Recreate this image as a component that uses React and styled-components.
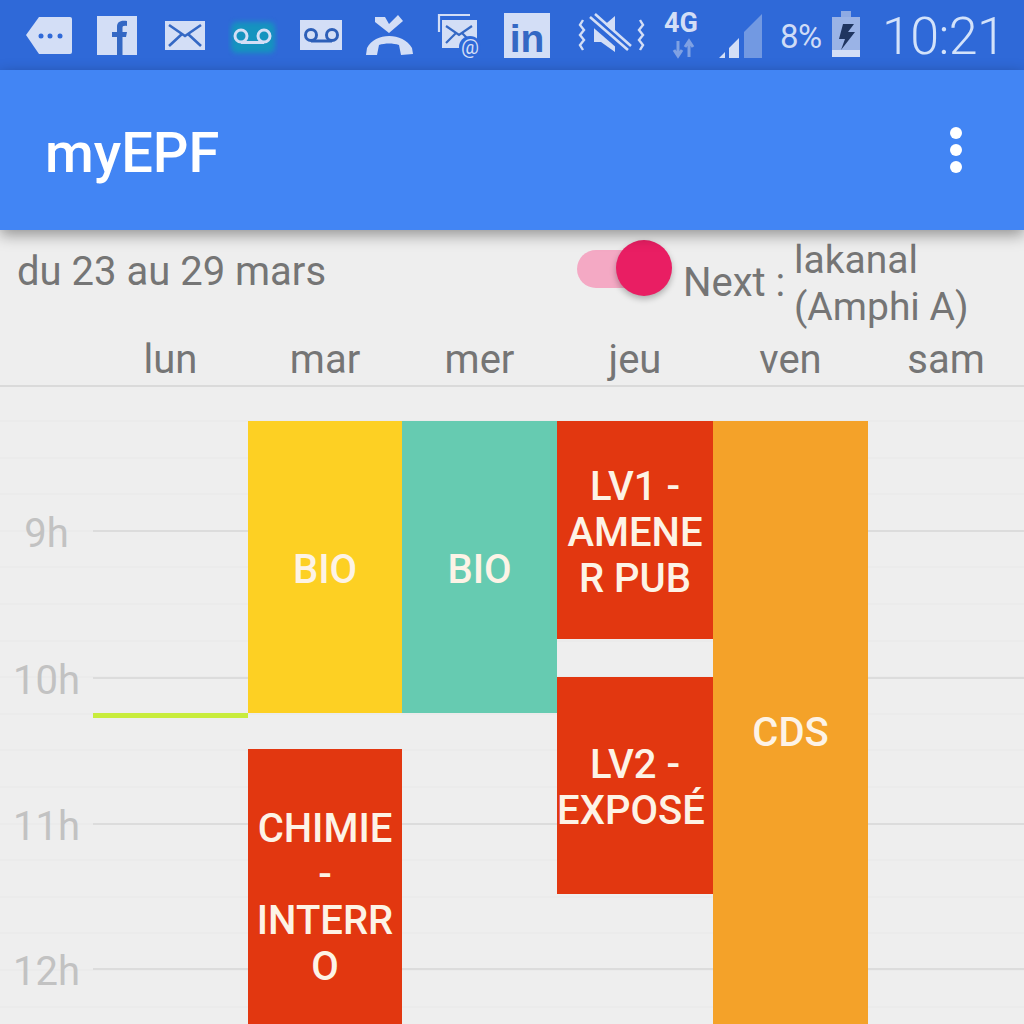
import React from 'react';
import styled, { createGlobalStyle } from 'styled-components';

const Global = createGlobalStyle`
  html, body { margin: 0; padding: 0; background: #eeeeee; }
  body { font-family: Roboto, "Liberation Sans", sans-serif; }
`;

const COLUMNS = '93px 155px 154px 155px 156px 155px 156px';

const Page = styled.div`
  width: 1024px;
  height: 1024px;
  overflow: hidden;
  background: #eeeeee;
  display: flex;
  flex-direction: column;
`;

const StatusBar = styled.div`
  height: 70px;
  flex: none;
  background: #2f69d8;
  display: flex;
  align-items: center;
  padding-left: 25px;
  color: #cfdcf6;
`;

const Glyph = styled.svg`
  height: 70px;
  flex: none;
  margin-left: ${p => p.$gap || 0}px;
  display: block;
`;

const Halo = styled.rect`
  filter: blur(2.5px);
`;

const Percent = styled.span`
  margin-left: ${p => p.$gap}px;
  width: 42px;
  flex: none;
  font-size: 33px;
  letter-spacing: -0.5px;
  white-space: nowrap;
  position: relative;
  top: 1px;
`;

const Clock = styled.span`
  margin-left: 22px;
  font-size: 52px;
  font-weight: 300;
  letter-spacing: -0.6px;
  color: #d3e2fa;
  white-space: nowrap;
  position: relative;
  top: 1px;
`;

const AppBar = styled.header`
  height: 160px;
  flex: none;
  background: #4285f4;
  display: flex;
  align-items: center;
  justify-content: space-between;
  padding: 0 62px 0 45px;
  box-shadow: 0 5px 14px rgba(0, 0, 0, 0.38);
  position: relative;
  z-index: 2;
`;

const Title = styled.h1`
  margin: 0;
  font-size: 56px;
  font-weight: 500;
  color: #ffffff;
  position: relative;
  top: 3px;
`;

const Dots = styled.div`
  display: flex;
  flex-direction: column;
  gap: 5px;
`;

const Dot = styled.span`
  width: 12px;
  height: 12px;
  border-radius: 50%;
  background: #ffffff;
`;

const InfoRow = styled.div`
  height: 109px;
  flex: none;
  display: flex;
  align-items: flex-start;
  padding: 19px 0 0 17px;
  box-sizing: border-box;
  color: #757575;
  font-size: 40px;
`;

const DateRange = styled.div`
  width: 560px;
  flex: none;
  line-height: 46px;
  white-space: nowrap;
`;

const Toggle = styled.div`
  width: 92px;
  height: 56px;
  flex: none;
  position: relative;
  margin-top: -9px;
`;

const Track = styled.div`
  position: absolute;
  left: 0;
  top: 10px;
  width: 80px;
  height: 38px;
  border-radius: 19px;
  background: #f4a9c4;
`;

const Knob = styled.div`
  position: absolute;
  left: 39px;
  top: 0;
  width: 56px;
  height: 56px;
  border-radius: 50%;
  background: #e91e63;
  box-shadow: 0 3px 6px rgba(0, 0, 0, 0.28);
`;

const NextLabel = styled.div`
  width: 111px;
  flex: none;
  margin-left: 14px;
  line-height: 46px;
  margin-top: 11px;
  white-space: nowrap;
`;

const NextPlace = styled.div`
  font-size: 39px;
  line-height: 47px;
  margin-top: -12px;
  white-space: nowrap;
`;

const DayHeader = styled.div`
  height: 58px;
  flex: none;
  display: grid;
  grid-template-columns: ${COLUMNS};
  border-bottom: 2px solid #dadada;
  margin-top: -12px;
`;

const DayName = styled.div`
  grid-column: ${p => p.$col};
  font-size: 40px;
  line-height: 46px;
  color: #757575;
  text-align: center;
  padding-top: 10px;
`;

const Timetable = styled.div`
  display: grid;
  grid-template-columns: ${COLUMNS};
  grid-auto-rows: 1px;
  height: 680px;
  flex: none;
`;

const Faint = styled.div`
  grid-column: 1 / -1;
  grid-row: ${p => p.$y} / span 2;
  background: #ebebeb;
`;

const HourLine = styled.div`
  grid-column: 2 / -1;
  grid-row: ${p => p.$y} / span 2;
  background: #dcdcdc;
`;

const HourLabel = styled.div`
  grid-column: 1;
  grid-row: ${p => p.$y - 30} / span 60;
  align-self: center;
  text-align: center;
  font-size: 40px;
  color: #c2c2c2;
  padding-top: 6px;
`;

const NowLine = styled.div`
  grid-column: 2;
  grid-row: 327 / span 5;
  background: #c8ec3c;
`;

const Event = styled.div`
  grid-column: ${p => p.$col};
  grid-row: ${p => p.$from} / ${p => p.$to};
  background: ${p => p.$bg};
  color: #fdf3e6;
  font-size: 40px;
  font-weight: 500;
  line-height: 46px;
  display: flex;
  align-items: center;
  justify-content: center;
  text-align: center;
  white-space: nowrap;
  overflow: hidden;
  padding-top: 5px;
  box-sizing: border-box;
`;

const EventLine = styled.div`
  transform: translateX(${p => p.$nudge || 0}px);
`;

const Y = 387;
const row = y => y - Y + 1;

const faintYs = [];
for (let y = 420; y < 1024; y += 36.6) faintYs.push(Math.round(y));

const hours = [['9h', 530], ['10h', 677], ['11h', 823], ['12h', 968]];
const days = ['lun', 'mar', 'mer', 'jeu', 'ven', 'sam'];

const events = [
  { col: 3, from: 421, to: 713, bg: '#fdd023', lines: ['BIO'] },
  { col: 4, from: 421, to: 713, bg: '#66cbb1', lines: ['BIO'] },
  { col: 5, from: 421, to: 639, bg: '#e23710', lines: ['LV1 -', 'AMENE', 'R PUB'] },
  { col: 5, from: 677, to: 894, bg: '#e23710', lines: ['LV2 -', 'EXPOSÉ'], nudge: { 'EXPOSÉ': -4 } },
  { col: 6, from: 421, to: 1040, bg: '#f4a229', lines: ['CDS'] },
  { col: 3, from: 749, to: 1041, bg: '#e23710', lines: ['CHIMIE', '-', 'INTERR', 'O'] },
];

const L = '#d3def6';
const B = '#2f69d8';

const StatusIcons = () => (
  <>
    <Glyph viewBox="0 0 48 70" width="48">
      <path d="M14 17H45a2 2 0 0 1 2 2V52a2 2 0 0 1-2 2H14L1 35Z" fill={L} />
      <circle cx="16" cy="36" r="2.5" fill={B} /><circle cx="25" cy="36" r="2.5" fill={B} /><circle cx="35" cy="36" r="2.5" fill={B} />
    </Glyph>
    <Glyph viewBox="0 0 40 70" width="40" $gap={24}>
      <rect x="0" y="16" width="40" height="39" fill={L} />
      <path d="M20 55V37H15V32H20V27C20 22 23 20 30 21V26C26 25.5 25.5 26.5 25.5 28V32H30L29 37H25.500V55Z" fill="#3468c4" />
    </Glyph>
    <Glyph viewBox="0 0 40 70" width="40" $gap={28}>
      <rect x="0" y="21" width="40" height="29" fill={L} />
      <path d="M4 25L20 36L36 25M4 46L17 34M36 46L23 34" stroke="#3468c4" strokeWidth="2.600" fill="none" />
    </Glyph>
    <Glyph viewBox="0 0 50 70" width="50" $gap={23}>
      <Halo x="3" y="22" width="44" height="31" rx="6" fill="#1593bf" />
      <circle cx="13" cy="36" r="6" stroke={L} strokeWidth="3" fill="none" />
      <circle cx="36" cy="36" r="6" stroke={L} strokeWidth="3" fill="none" />
      <path d="M13 42.500H36" stroke={L} strokeWidth="3" />
    </Glyph>
    <Glyph viewBox="0 0 42 70" width="42" $gap={22}>
      <rect x="0" y="20" width="42" height="30" fill={L} />
      <circle cx="11" cy="35" r="5.500" stroke="#2d5fb8" strokeWidth="3" fill="none" />
      <circle cx="32" cy="35" r="5.500" stroke="#2d5fb8" strokeWidth="3" fill="none" />
      <path d="M11 41H32" stroke="#2d5fb8" strokeWidth="3" />
    </Glyph>
    <Glyph viewBox="0 0 49 70" width="49" $gap={23}>
      <path d="M10 17H20L24 24L33 15L38 21L24 33L10 22Z" fill={L} />
      <path d="M2 48C10 32 38 32 47 48L48 54L36 55L34 45C28 43 20 43 14 45L12 55L1 55Z" fill={L} />
    </Glyph>
    <Glyph viewBox="0 0 44 70" width="44" $gap={23}>
      <path d="M2 32V15H33" stroke={L} strokeWidth="2.200" fill="none" />
      <rect x="5" y="20" width="35" height="28" fill={L} />
      <path d="M9 26L22 35L35 26M9 43L19 33M35 43L25 33" stroke="#3468c4" strokeWidth="2.200" fill="none" />
      <circle cx="33" cy="47" r="11" fill={B} />
      <text x="33" y="54" textAnchor="middle" fontSize="20" fontFamily="Roboto" fill={L}>@</text>
    </Glyph>
    <Glyph viewBox="0 0 46 70" width="46" $gap={23}>
      <rect x="0" y="13" width="46" height="45" fill={L} />
      <text x="23" y="52" textAnchor="middle" fontSize="39" fontWeight="700" fontFamily="Liberation Sans" fill="#3468c4">in</text>
    </Glyph>
    <Glyph viewBox="0 0 68 70" width="68" $gap={28}>
      <path d="M5 20L2 25L6 30L2 35L6 40L2 45L5 50M62 20L65 25L61 30L65 35L61 40L65 45L62 50" stroke={L} strokeWidth="2.400" fill="none" />
      <path d="M16 28H23L37 16V52L23 42H16Z" fill={L} />
      <path d="M13 19L51 52" stroke={B} strokeWidth="10" />
      <path d="M12 17L50 50M17 14L53 46" stroke={L} strokeWidth="2.600" />
    </Glyph>
    <Glyph viewBox="0 0 40 70" width="40" $gap={18}>
      <text x="0" y="32" fontSize="27" fontWeight="700" fontFamily="Roboto" fill={L}>4G</text>
      <path d="M14 41V55M10 50L14 56L18 50M25 57V43M21 47L25 41L29 47" stroke="#7fa1e3" strokeWidth="3" fill="none" />
    </Glyph>
    <Glyph viewBox="0 0 45 70" width="45" $gap={14}>
      <path d="M26 32L44 14V58H26Z" fill="#7299e2" />
      <path d="M1 58L7 52V58ZM11 58V48L21 38V58Z" fill={L} />
    </Glyph>
    <Percent $gap={17}>8%</Percent>
    <Glyph viewBox="0 0 28 70" width="28" $gap={10}>
      <rect x="9" y="11" width="10" height="6" fill="#8eaae3" />
      <rect x="0" y="17" width="28" height="34" fill="#9ab3e6" />
      <rect x="0" y="50" width="28" height="7" fill={L} />
      <path d="M22 24L11 24L7 39H13L9 50L23 32H16Z" fill="#1f3560" />
    </Glyph>
    <Clock>10:21</Clock>
  </>
);

export default function App() {
  return (
    <Page>
      <Global />
      <StatusBar><StatusIcons /></StatusBar>
      <AppBar>
        <Title>myEPF</Title>
        <Dots><Dot /><Dot /><Dot /></Dots>
      </AppBar>
      <InfoRow>
        <DateRange>du 23 au 29 mars</DateRange>
        <Toggle><Track /><Knob /></Toggle>
        <NextLabel>Next :</NextLabel>
        <NextPlace>lakanal<br />(Amphi A)</NextPlace>
      </InfoRow>
      <DayHeader>
        {days.map((d, i) => <DayName key={d} $col={i + 2}>{d}</DayName>)}
      </DayHeader>
      <Timetable>
        {faintYs.map(y => <Faint key={y} $y={row(y)} />)}
        {hours.map(([h, y]) => <HourLine key={h} $y={row(y)} />)}
        {hours.map(([h, y]) => <HourLabel key={h} $y={row(y)}>{h}</HourLabel>)}
        <NowLine />
        {events.map(e => (
          <Event key={e.col + '-' + e.from} $col={e.col} $from={row(e.from)} $to={row(e.to)} $bg={e.bg}>
            <div>{e.lines.map(l => <EventLine key={l} $nudge={e.nudge && e.nudge[l]}>{l}</EventLine>)}</div>
          </Event>
        ))}
      </Timetable>
    </Page>
  );
}
